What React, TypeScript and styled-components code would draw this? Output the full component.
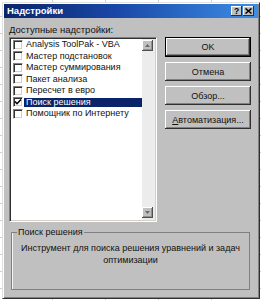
import React from 'react';
import styled, { createGlobalStyle } from 'styled-components';

const Global = createGlobalStyle`
  html, body { margin: 0; padding: 0; }
  body {
    width: 261px;
    height: 300px;
    overflow: hidden;
    background-color: #fff;
    background-image:
      repeating-linear-gradient(to bottom, transparent 0 16px, #cfcfcf 16px 17px),
      repeating-linear-gradient(to right, transparent 0 52px, #cfcfcf 52px 53px);
    font-family: "Liberation Sans", Arial, sans-serif;
    color: #111;
  }
`;

const Page = styled.div`
  padding: 2px 1px 0 2px;
`;

const Window = styled.div`
  width: 258px;
  height: 297px;
  box-sizing: border-box;
  background: #c0c0c0;
  border: 1px solid;
  border-color: #dfdfdf #303030 #303030 #dfdfdf;
  padding: 1px;
  box-shadow: inset 1px 1px #fff, inset -1px -1px #808080;
  display: flex;
  flex-direction: column;
`;

const TitleBar = styled.div`
  height: 14px;
  flex: none;
  display: flex;
  align-items: center;
  padding: 0 4px 0 3px;
  background: linear-gradient(to right, #0a246a 0%, #1a48a8 45%, #3d8ee6 100%);
`;

const Title = styled.div`
  flex: 1;
  color: #fff;
  font-weight: bold;
  font-size: 9.5px;
  line-height: 14px;
  white-space: nowrap;
`;

const TitleButtons = styled.div`
  display: flex;
  gap: 1px;
`;

const TitleButton = styled.div`
  width: 11px;
  height: 10px;
  box-sizing: border-box;
  background: #c0c0c0;
  box-shadow: inset -1px -1px #303030, inset 1px 1px #fff;
  display: flex;
  align-items: center;
  justify-content: center;
  font-weight: bold;
  font-size: 8.5px;
  line-height: 10px;
  color: #000;
`;

const Main = styled.div`
  display: flex;
  gap: 8px;
  padding: 6px 7px 0 5px;
`;

const LeftCol = styled.div`
  width: 148px;
  display: flex;
  flex-direction: column;
`;

const Caption = styled.div`
  font-size: 9.5px;
  line-height: 12px;
  height: 12px;
  margin-bottom: 1px;
  white-space: nowrap;
`;

const ListBox = styled.div`
  height: 185px;
  box-sizing: border-box;
  border: 1px solid;
  border-color: #808080 #fff #fff #808080;
  box-shadow: inset 1px 1px #303030, inset -1px -1px #d4d0c8;
  padding: 1px;
  background: #fff;
  display: flex;
`;

const Items = styled.div`
  flex: 1;
  padding-left: 2px;
  display: flex;
  flex-direction: column;
`;

const Row = styled.div`
  height: 11.5px;
  display: flex;
  align-items: center;
`;

const Check = styled.div`
  width: 10px;
  height: 10px;
  flex: none;
  box-sizing: border-box;
  background: #fff;
  border: 1px solid;
  border-color: #808080 #fff #fff #808080;
  box-shadow: inset 1px 1px #303030, inset -1px -1px #d4d0c8;
  display: flex;
  align-items: center;
  justify-content: center;
`;

const ItemLabel = styled.div<{ $selected?: boolean }>`
  flex: 1;
  margin-left: 1px;
  padding-left: 2px;
  font-size: 9px;
  line-height: 9px;
  height: 9px;
  white-space: nowrap;
  background: ${(p) => (p.$selected ? '#0a246a' : 'transparent')};
  color: ${(p) => (p.$selected ? '#fff' : '#111')};
`;

const ScrollBar = styled.div`
  width: 12px;
  flex: none;
  display: flex;
  flex-direction: column;
  justify-content: space-between;
  background: #ececec;
  padding: 1px 1px 2px 0;
`;

const ArrowButton = styled.div`
  width: 11px;
  height: 11px;
  box-sizing: border-box;
  background: #c0c0c0;
  box-shadow: inset -1px -1px #505050, inset 1px 1px #fff, inset -2px -2px #909090;
  display: flex;
  align-items: center;
  justify-content: center;
`;

const RightCol = styled.div`
  width: 86px;
  display: flex;
  flex-direction: column;
  gap: 5px;
  padding-top: 13px;
`;

const Button = styled.div<{ $default?: boolean }>`
  height: ${(p) => (p.$default ? '20px' : '19px')};
  box-sizing: border-box;
  border: ${(p) => (p.$default ? '1px solid #000' : 'none')};
  background: #c0c0c0;
  box-shadow: inset -1px -1px #303030, inset 1px 1px #fff, inset -2px -2px #808080;
  display: flex;
  align-items: center;
  justify-content: center;
  font-size: 9px;
  color: #111;
  white-space: nowrap;
`;

const U = styled.span`
  text-decoration: underline;
`;

const GroupBox = styled.fieldset`
  margin: 5px 8px 0 7px;
  height: 63px;
  box-sizing: border-box;
  border: 1px solid #808080;
  box-shadow: inset 1px 0 #f4f4f4;
  padding: 0 4px;
  min-width: 0;
`;

const Legend = styled.legend`
  padding: 0 1px;
  margin-left: 1px;
  font-size: 9px;
  line-height: 10px;
  color: #111;
`;

const Description = styled.div`
  text-align: center;
  font-size: 9px;
  line-height: 12px;
  padding-top: 5px;
`;

const items = [
  { label: 'Analysis ToolPak - VBA' },
  { label: 'Мастер подстановок' },
  { label: 'Мастер суммирования' },
  { label: 'Пакет анализа' },
  { label: 'Пересчет в евро' },
  { label: 'Поиск решения', checked: true, selected: true },
  { label: 'Помощник по Интернету' },
];

const CheckMark = () => (
  <svg width="8" height="8" viewBox="0 0 8 8">
    <path d="M1 3.5 L3 5.7 L7 1.5" fill="none" stroke="#000" strokeWidth="1.6" />
  </svg>
);

const Arrow = ({ up }: { up?: boolean }) => (
  <svg width="5" height="3" viewBox="0 0 5 3">
    <path d={up ? 'M0 3 L2.5 0 L5 3 Z' : 'M0 0 L2.5 3 L5 0 Z'} fill="#6a6a6a" />
  </svg>
);

const CloseGlyph = () => (
  <svg width="7" height="6" viewBox="0 0 7 6">
    <path d="M0.5 0.5 L6.5 5.5 M6.5 0.5 L0.5 5.5" stroke="#000" strokeWidth="1.5" />
  </svg>
);

export default function App() {
  return (
    <>
      <Global />
      <Page>
        <Window>
          <TitleBar>
            <Title>Надстройки</Title>
            <TitleButtons>
              <TitleButton>?</TitleButton>
              <TitleButton>
                <CloseGlyph />
              </TitleButton>
            </TitleButtons>
          </TitleBar>
          <Main>
            <LeftCol>
              <Caption>Доступные надстройки:</Caption>
              <ListBox>
                <Items>
                  {items.map((it) => (
                    <Row key={it.label}>
                      <Check>{it.checked && <CheckMark />}</Check>
                      <ItemLabel $selected={it.selected}>{it.label}</ItemLabel>
                    </Row>
                  ))}
                </Items>
                <ScrollBar>
                  <ArrowButton>
                    <Arrow up />
                  </ArrowButton>
                  <ArrowButton>
                    <Arrow />
                  </ArrowButton>
                </ScrollBar>
              </ListBox>
            </LeftCol>
            <RightCol>
              <Button $default>OK</Button>
              <Button>Отмена</Button>
              <Button>Обзор...</Button>
              <Button>
                <U>А</U>втоматизация...
              </Button>
            </RightCol>
          </Main>
          <GroupBox>
            <Legend>Поиск решения</Legend>
            <Description>
              Инструмент для поиска решения уравнений и задач
              <br />
              оптимизации
            </Description>
          </GroupBox>
        </Window>
      </Page>
    </>
  );
}
